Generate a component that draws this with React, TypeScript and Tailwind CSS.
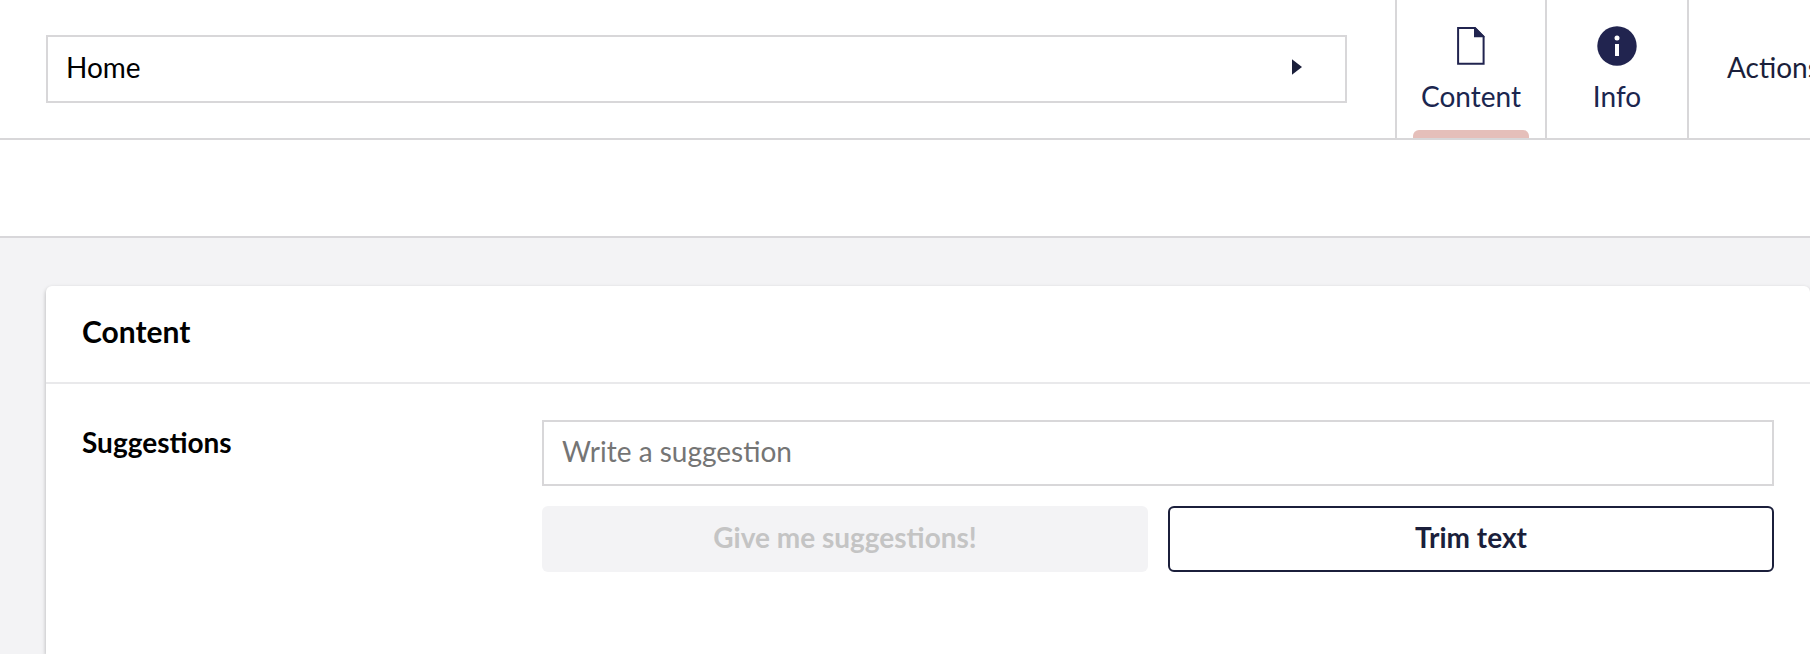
import React from "react";

function DocumentIcon() {
  return (
    <svg className="h-[38px] w-[28px]" viewBox="0 0 28 38" fill="none">
      <path d="M1.1 1.1H18L26.6 9.6V36.7H1.1Z" stroke="#21244f" strokeWidth="2" />
      <path d="M17 0.5H18.5L27.5 9.5V10.3H17Z" fill="#21244f" />
    </svg>
  );
}

function InfoIcon() {
  return (
    <svg className="h-10 w-10" viewBox="0 0 40 40">
      <circle cx="20" cy="20" r="19.7" fill="#21244f" />
      <circle cx="20" cy="12" r="2.5" fill="#fff" />
      <rect x="18" y="18" width="4" height="12" fill="#fff" />
    </svg>
  );
}

function Tab({ className, children }: { className: string; children: React.ReactNode }) {
  return (
    <button className={"flex h-[138px] shrink-0 flex-col items-center border-l-2 border-[#d8d7d9] text-[#1b264f] " + className}>
      {children}
    </button>
  );
}

export default function App() {
  return (
    <div className="flex h-[654px] w-full flex-col overflow-hidden bg-[#f3f3f5] font-['Lato',sans-serif] text-[28px] leading-[34px] text-black">
      <header className="flex h-[140px] shrink-0 items-start overflow-hidden border-b-2 border-[#d8d7d9] bg-white pl-[46px]">
        <div className="mt-[35px] mr-12 flex h-[68px] w-[1301px] shrink-0 items-center justify-between border-2 border-[#d8d7d9] pb-1 pl-[18px] pr-[42px]">
          <span>Home</span>
          <svg className="h-4 w-3" viewBox="0 0 12 16">
            <path d="M1 0.3L11 8L1 15.7Z" fill="#1b1f3b" />
          </svg>
        </div>
        <nav className="flex">
          <Tab className="w-[150px] pt-[27px]">
            <DocumentIcon />
            <span className="mt-[14px]">Content</span>
            <span className="mt-auto h-2 w-[116px] rounded-t-md bg-[#e5bfba]" />
          </Tab>
          <Tab className="w-[142px] pt-[26px]">
            <InfoIcon />
            <span className="mt-[13px]">Info</span>
          </Tab>
          <button className="flex h-[138px] w-[190px] shrink-0 items-center border-l-2 border-[#d8d7d9] pb-1 pl-[38px] text-[#1b1f3b]">
            Actions
          </button>
        </nav>
      </header>
      <div className="h-[98px] shrink-0 border-b-2 border-[#d8d7da] bg-white" />
      <main className="flex grow flex-col pt-12 pl-[46px]">
        <section className="grow rounded-t-md bg-white shadow-[0_2px_4px_rgba(0,0,0,0.28)]">
          <h2 className="flex h-[98px] items-center border-b-2 border-[#e9e9eb] pb-1.5 pl-9 text-[30px] font-bold">Content</h2>
          <div className="flex pt-9 pr-9 pl-9">
            <label className="w-[460px] shrink-0 pt-[5px] font-bold">Suggestions</label>
            <div className="flex grow flex-col gap-5">
              <input
                className="h-[66px] w-full border-2 border-[#d8d7d9] pb-1 pl-[18px] outline-none placeholder:text-[#757575]"
                placeholder="Write a suggestion"
              />
              <div className="grid grid-cols-2 gap-5">
                <button className="h-[66px] rounded-md bg-[#f3f3f5] pb-1 font-bold text-[#c4c4c4]" disabled>
                  Give me suggestions!
                </button>
                <button className="h-[66px] rounded-md border-2 border-[#1b1f3b] pb-1 font-bold text-[#1b1f3b]">
                  Trim text
                </button>
              </div>
            </div>
          </div>
        </section>
      </main>
    </div>
  );
}
